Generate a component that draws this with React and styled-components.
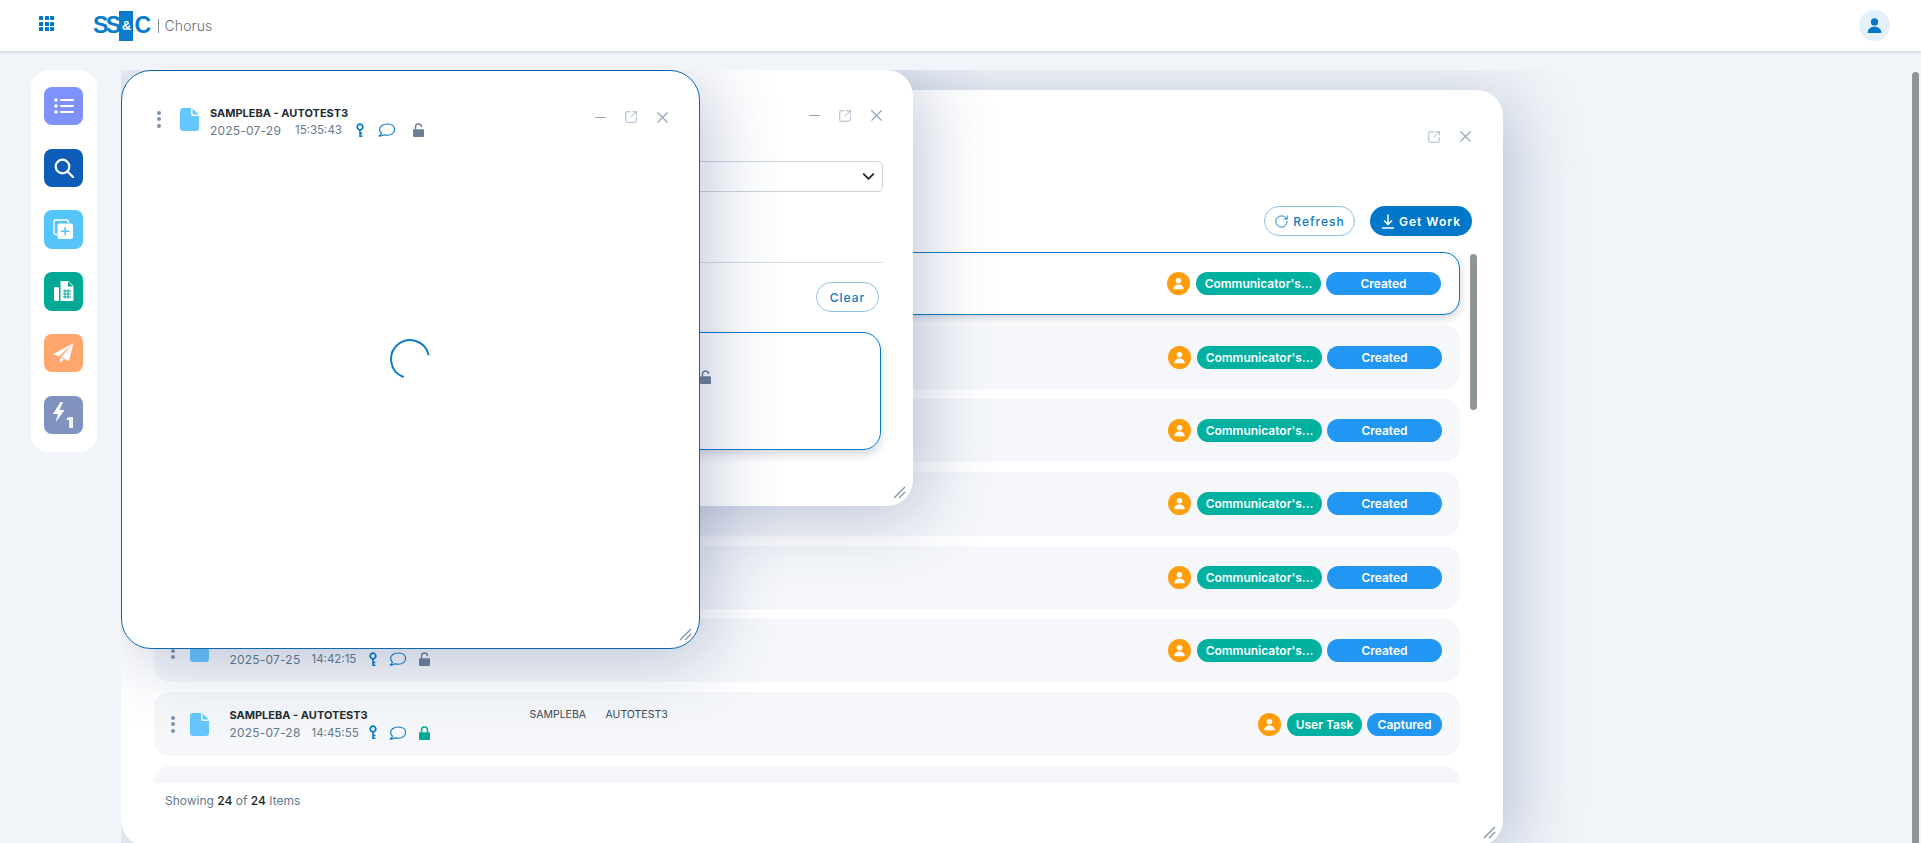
import React from "react";
import styled, { createGlobalStyle } from "styled-components";
import { Minus, X, SquareArrowOutUpRight, RotateCw, ChevronDown } from "lucide-react";

const FONT = `"Inter", "Open Sans", "Liberation Sans", sans-serif`;

const GlobalStyle = createGlobalStyle`
  * { box-sizing: border-box; }
  html, body { margin: 0; height: 100%; overflow: hidden; }
  body { background: #f1f5f9; font-family: ${FONT}; color: #212b36; }
  #root { height: 100%; }
`;

const Page = styled.div`
  height: 100vh;
  display: flex;
  flex-direction: column;
  position: relative;
`;

const TopBar = styled.header`
  height: 51px;
  flex: none;
  display: flex;
  align-items: center;
  padding: 0 31px 0 39px;
  background: #fff;
  box-shadow: 0 1px 3px rgba(60, 70, 90, 0.22);
  position: relative;
  z-index: 5;
`;

const AppGrid = styled.div`
  display: grid;
  grid-template-columns: repeat(3, 4px);
  grid-auto-rows: 4px;
  gap: 1.5px;
  margin-bottom: 4px;

  i { background: #0077c8; border-radius: 0.5px; }
`;

const Logo = styled.div`
  display: flex;
  align-items: center;
  margin-left: 39px;
  height: 30px;
  font-size: 23px;
  font-weight: 800;
  letter-spacing: -2.6px;
  color: #0a7ccb;
  font-family: "Liberation Sans", sans-serif;
`;

const LogoBlock = styled.span`
  width: 14px;
  height: 30px;
  background: #0a7ccb;
  color: #fff;
  font-size: 13px;
  letter-spacing: 0;
  display: flex;
  align-items: center;
  justify-content: center;
  margin: 0 1px 0 1px;
`;

const LogoProduct = styled.span`
  margin-left: 9px;
  padding-left: 6px;
  border-left: 1px solid #8a8f98;
  font-family: ${FONT};
  font-size: 14px;
  line-height: 14px;
  font-weight: 300;
  letter-spacing: 0.1px;
  color: #6c7078;
`;

const Avatar = styled.div`
  width: 31px;
  height: 31px;
  margin-left: auto;
  border-radius: 50%;
  background: #e5f1fa;
  display: flex;
  align-items: center;
  justify-content: center;
`;

const Desktop = styled.main`
  flex: 1;
  min-height: 0;
  display: flex;
  align-items: stretch;
  padding: 19px 0 0 31px;
`;

const Sidebar = styled.nav`
  width: 66px;
  height: 382px;
  flex: none;
  padding: 17px 13px 18px;
  display: flex;
  flex-direction: column;
  gap: 23.4px;
  background: #fff;
  border-radius: 18px;
`;

const SideButton = styled.button`
  all: unset;
  box-sizing: border-box;
  width: 39px;
  height: 38.5px;
  border-radius: 8px;
  background: ${(p) => p.$bg};
  display: flex;
  align-items: center;
  justify-content: center;
  color: #fff;
`;

/* free canvas the windows float on, it clips their shadows */
const WindowCanvas = styled.div`
  flex: 1;
  margin-left: 24px;
  position: relative;
  overflow: hidden;
`;

const Win = styled.section`
  position: absolute;
  left: ${(p) => p.$left}px;
  top: ${(p) => p.$top}px;
  width: ${(p) => p.$width}px;
  height: ${(p) => p.$height}px;
  z-index: ${(p) => p.$z};
  background: #fff;
  border-radius: ${(p) => (p.$active ? 30 : 26)}px;
  border: ${(p) => (p.$active ? "1px solid #0a69ad" : "none")};
  box-shadow: 10px 10px 70px rgba(45, 70, 130, 0.3);
  display: flex;
  flex-direction: column;
`;

const WinControls = styled.div`
  display: flex;
  align-items: center;
  justify-content: flex-end;
  gap: 15px;
  margin-left: auto;
  margin-bottom: ${(p) => p.$lift || 0}px;
  color: #8fa3ba;
`;

const Grip = styled.svg`
  position: absolute;
  right: 7px;
  bottom: 7px;
  width: 13px;
  height: 13px;
`;

/* work list window */
const ListHead = styled.div`
  padding: 37px 28px 0 0;
  height: 116px;
`;

const Toolbar = styled.div`
  display: flex;
  justify-content: flex-end;
  gap: 15px;
  padding-right: 31px;
`;

const PillButton = styled.button`
  all: unset;
  box-sizing: border-box;
  height: 30px;
  width: ${(p) => p.$w}px;
  border-radius: 15px;
  display: flex;
  align-items: center;
  justify-content: center;
  gap: 4px;
  font-size: 12px;
  font-weight: ${(p) => (p.$primary ? 600 : 500)};
  letter-spacing: 1px;
  color: ${(p) => (p.$primary ? "#fff" : "#0c78c4")};
  background: ${(p) => (p.$primary ? "#0077c8" : "#fff")};
  border: ${(p) => (p.$primary ? "none" : "1px solid #8cc2e8")};
`;

const ListArea = styled.div`
  position: relative;
  margin: 16px 23px 0 33px;
  height: 531px;
  padding-right: 20px;
  overflow: hidden;
  display: flex;
  flex-direction: column;
  gap: 10px;
`;

const ScrollThumb = styled.div`
  position: absolute;
  right: 3px;
  top: 2px;
  width: 7px;
  height: 156px;
  border-radius: 4px;
  background: #8f9496;
`;

const PageThumb = styled(ScrollThumb)`
  right: 2px;
  top: 72px;
  height: 790px;
  z-index: 6;
`;

const Row = styled.div`
  flex: none;
  height: 63.4px;
  display: flex;
  align-items: center;
  padding: 0 18px 0 16.5px;
  border-radius: 16px;
  background: ${(p) => (p.$selected ? "#fff" : "#f5f7fa")};
  border: ${(p) => (p.$selected ? "1px solid #0c78c4" : "none")};
  box-shadow: ${(p) => (p.$selected ? "0 3px 8px rgba(60, 70, 110, 0.25)" : "none")};
`;

const Kebab = styled.div`
  width: 5px;
  display: flex;
  flex-direction: column;
  gap: 2.5px;
  flex: none;

  i { width: 4px; height: 4px; border-radius: 50%; background: #7f93ab; }
`;

const Info = styled.div`
  margin-left: ${(p) => p.$gap}px;
  width: ${(p) => p.$width}px;
  flex: none;
`;

const Title = styled.div`
  font-size: 11px;
  line-height: 16px;
  font-weight: 700;
  color: #232b33;
  white-space: nowrap;
`;

const Meta = styled.div`
  display: flex;
  align-items: center;
  margin-top: 1px;
  height: 17px;
  font-size: 11.5px;
  color: #64788f;
  white-space: nowrap;
`;

const MetaDate = styled.span`
  width: 70px;
  font-size: 12px;
  letter-spacing: 0.2px;
`;

const MetaTime = styled.span`
  margin-left: ${(p) => p.$gap}px;
  width: ${(p) => p.$width}px;
`;

const FileShape = styled.svg`
  flex: none;
  margin-left: ${(p) => p.$gap}px;
`;

const MetaIcon = styled.svg`
  flex: none;
  margin-left: ${(p) => p.$gap}px;
`;

const Field = styled.span`
  font-size: 10.5px;
  color: #3d4650;
  margin-right: ${(p) => p.$gap}px;
  align-self: flex-start;
  margin-top: 16px;
`;

const Badges = styled.div`
  margin-left: auto;
  display: flex;
  align-items: center;
  gap: 5px;
`;

const Person = styled.div`
  width: 23px;
  height: 23px;
  margin-right: 1px;
  border-radius: 50%;
  background: #ff9d0a;
  display: flex;
  align-items: center;
  justify-content: center;
`;

const Badge = styled.span`
  height: 23px;
  width: ${(p) => p.$w}px;
  border-radius: 12px;
  background: ${(p) => (p.$kind === "task" ? "#00b0a0" : "#2196f3")};
  color: #fff;
  font-size: 12px;
  font-weight: 600;
  display: flex;
  align-items: center;
  justify-content: center;
  white-space: nowrap;
`;

const Footer = styled.div`
  padding: 10px 0 0 44px;
  font-size: 12px;
  color: #64788f;

  b { font-weight: 500; color: #1c232b; }
`;

/* query window */
const QueryHead = styled.div`
  padding: 36px 27px 0 0;
  height: 91px;
`;

const FakeSelect = styled.div`
  height: 31px;
  margin: 0 30px 0 40px;
  border: 1px solid #c9d4de;
  border-radius: 5px;
  display: flex;
  align-items: center;
  justify-content: flex-end;
  padding-right: 4px;
  color: #222b33;
`;

const Divider = styled.hr`
  margin: 70px 30px 0 40px;
  border: 0;
  border-top: 1px solid #d8dfe6;
`;

const ClearRow = styled.div`
  display: flex;
  justify-content: flex-end;
  padding: 19px 34px 0 0;
`;

const ResultCard = styled.div`
  height: 118px;
  margin: 20px 32px 0 40px;
  padding: 18px 0 0 14px;
  display: flex;
  align-items: flex-start;
  border: 1.5px solid #0077c8;
  border-radius: 18px;
  box-shadow: 0 5px 10px rgba(60, 70, 110, 0.2);
`;

/* viewer window */
const ViewerHead = styled.div`
  display: flex;
  align-items: center;
  padding: 31px 27px 0 35px;
  height: 70px;

  & > ${Kebab}, & > ${FileShape} {
    margin-bottom: 5px;
  }
`;

const ViewerBody = styled.div`
  flex: 1;
  display: flex;
  align-items: center;
  justify-content: center;
  padding: 0 2px 70px 0;
`;

const FileIcon = ({ gap = 0 }) => (
  <FileShape $gap={gap} width="19" height="23" viewBox="0 0 19 23">
    <path d="M3 0h8v6a2 2 0 0 0 2 2h6v12a3 3 0 0 1-3 3H3a3 3 0 0 1-3-3V3a3 3 0 0 1 3-3z" fill="#66c7ff" />
    <path d="M12.5 0.4 18.6 6.6H13.5a1 1 0 0 1-1-1z" fill="#66c7ff" />
  </FileShape>
);

const KeyIcon = ({ gap }) => (
  <MetaIcon $gap={gap} width="8" height="15" viewBox="0 0 8 15" fill="none" stroke="#0077c8">
    <circle cx="4" cy="4" r="2.8" strokeWidth="1.7" />
    <path d="M4 7v7M4 10.5h2.4M4 13.2h2.4" strokeWidth="1.6" />
  </MetaIcon>
);

const ChatIcon = ({ gap }) => (
  <MetaIcon $gap={gap} width="18" height="14" viewBox="0 0 18 14" fill="none" stroke="#0077c8" strokeWidth="1.1">
    <path d="M9.5 1C5 1 1.6 3.3 1.6 6.4c0 1.500.7 2.700 1.900 3.700-.3 1.200-1.200 2.300-2.600 3 2.300 0 4-.5 5.100-1.300 1 .3 2.100.5 3.100.5 4.400 0 7.500-2.500 7.500-5.800S13.900 1 9.500 1z" />
  </MetaIcon>
);

const LockIcon = ({ gap, closed }) => {
  const color = closed ? "#00a896" : "#6c7f96";
  return (
    <MetaIcon $gap={gap} width="11" height="14" viewBox="0 0 11 14" fill="none">
      <path
        d={closed ? "M2.500 6.500V4a3 3 0 0 1 6 0v2.500" : "M2.500 6.500V4a3 3 0 0 1 6 0"}
        stroke={color}
        strokeWidth="1.4"
      />
      <rect x="0" y="6.300" width="11" height="7.700" rx="1" fill={color} />
    </MetaIcon>
  );
};

const PersonGlyph = ({ size = 15, color = "#fff" }) => (
  <svg width={size} height={size} viewBox="0 0 16 16" fill={color}>
    <circle cx="8" cy="4.600" r="3.400" />
    <path d="M1.500 15c0-3.600 2.900-5.800 6.500-5.800s6.500 2.200 6.500 5.800z" />
  </svg>
);

const Controls = ({ minimize, lift }) => (
  <WinControls $lift={lift}>
    {minimize && <Minus size={17} strokeWidth={1.4} />}
    <SquareArrowOutUpRight size={14} strokeWidth={1.3} />
    <X size={19} strokeWidth={1.4} />
  </WinControls>
);

const ResizeGrip = () => (
  <Grip viewBox="0 0 13 13" fill="none" stroke="#8090a6" strokeWidth="1.300">
    <path d="M1 12 12 1M6 12l6-6" />
  </Grip>
);

const Dots = () => (
  <Kebab>
    <i />
    <i />
    <i />
  </Kebab>
);

const ItemInfo = ({ date, time, closed, timeGap, timeWidth, infoGap, infoWidth, keyGap, chatGap, lockGap }) => (
  <Info $gap={infoGap} $width={infoWidth}>
    <Title>SAMPLEBA - AUTOTEST3</Title>
    <Meta>
      <MetaDate>{date}</MetaDate>
      <MetaTime $gap={timeGap} $width={timeWidth}>{time}</MetaTime>
      <KeyIcon gap={keyGap} />
      <ChatIcon gap={chatGap} />
      <LockIcon gap={lockGap} closed={closed} />
    </Meta>
  </Info>
);

const WORK_ITEMS = [
  { date: "2025-07-25", time: "14:35:02", task: "Communicator's...", status: "Created" },
  { date: "2025-07-25", time: "14:36:10", task: "Communicator's...", status: "Created" },
  { date: "2025-07-25", time: "14:37:21", task: "Communicator's...", status: "Created" },
  { date: "2025-07-25", time: "14:38:44", task: "Communicator's...", status: "Created" },
  { date: "2025-07-25", time: "14:40:03", task: "Communicator's...", status: "Created" },
  { date: "2025-07-25", time: "14:42:15", task: "Communicator's...", status: "Created" },
  { date: "2025-07-28", time: "14:45:55", task: "User Task", status: "Captured", closed: true, compact: true },
  { date: "2025-07-28", time: "14:47:30", task: "User Task", status: "Captured", closed: true, compact: true },
];

const rowInfo = {
  infoGap: 21,
  infoWidth: 300,
  timeGap: 12,
  timeWidth: 47,
  keyGap: 10,
  chatGap: 12,
  lockGap: 12.5,
};

export default function App() {
  return (
    <Page>
      <GlobalStyle />
      <TopBar>
        <AppGrid>
          {Array.from({ length: 9 }, (_, i) => (
            <i key={i} />
          ))}
        </AppGrid>
        <Logo>
          SS
          <LogoBlock>&amp;</LogoBlock>
          C<LogoProduct>Chorus</LogoProduct>
        </Logo>
        <Avatar>
          <PersonGlyph size={17} color="#0077c8" />
        </Avatar>
      </TopBar>

      <Desktop>
        <Sidebar>
          <SideButton $bg="#7f92fb">
            <svg width="20" height="16" viewBox="0 0 20 16" fill="#fff">
              <circle cx="2" cy="2" r="1.800" />
              <circle cx="2" cy="8" r="1.800" />
              <circle cx="2" cy="14" r="1.800" />
              <rect x="6" y="0.900" width="14" height="2.200" rx="1" />
              <rect x="6" y="6.900" width="14" height="2.200" rx="1" />
              <rect x="6" y="12.900" width="14" height="2.200" rx="1" />
            </svg>
          </SideButton>
          <SideButton $bg="#0c5cb8">
            <svg width="20" height="20" viewBox="0 0 20 20" fill="none" stroke="#fff" strokeWidth="2.200">
              <circle cx="8.500" cy="8.500" r="6.800" />
              <path d="M13.500 13.500 19 19" strokeLinecap="round" />
            </svg>
          </SideButton>
          <SideButton $bg="#55c4fb">
            <svg width="21" height="21" viewBox="0 0 21 21" fill="none" stroke="#fff" strokeWidth="1.300">
              <path d="M4 15.500H3a2 2 0 0 1-2-2V3a2 2 0 0 1 2-2h10.500a2 2 0 0 1 2 2v1" />
              <rect x="4.500" y="4.500" width="15.500" height="15.500" rx="2" fill="#fff" stroke="none" />
              <path d="M12.200 8v8.500M8 12.200h8.500" stroke="#55c4fb" strokeWidth="1.500" />
            </svg>
          </SideButton>
          <SideButton $bg="#00a896">
            <svg width="20" height="20" viewBox="0 0 20 20" fill="#fff">
              <rect x="0" y="6" width="5" height="14" rx="1.500" />
              <path d="M6.500 0h8l5 5v15h-13z" />
              <path d="M14 0.500V5.500h5" fill="#00a896" />
              <path d="M9 10h8M9 13h8M9 16h8M11 8.500v9M14 8.500v9" stroke="#00a896" strokeWidth="1" />
            </svg>
          </SideButton>
          <SideButton $bg="#ffa56e">
            <svg width="21" height="20" viewBox="0 0 21 20" fill="#fff">
              <path d="M20.500 0 0 11.200l6 2.300L20.500 0zM20.500 0 8 14.300l8 3.700L20.500 0zM7 15v4.500l4-3z" />
            </svg>
          </SideButton>
          <SideButton $bg="#7f92c0">
            <svg width="22" height="26" viewBox="0 0 22 26" fill="#fff">
              <path d="M7.500 0 0 12h5l-2.500 8.500L11.500 8H6.500L10 0z" />
              <rect x="16" y="15" width="4" height="11" opacity="0.9" />
              <path d="M13.500 16.500 16 15v3h-2.500z" opacity="0.9" />
            </svg>
          </SideButton>
        </Sidebar>

        <WindowCanvas>
          <Win $left={0} $top={20} $width={1382} $height={756} $z={1}>
            <ListHead>
              <Controls />
            </ListHead>
            <Toolbar>
              <PillButton $w={91}>
                <RotateCw size={15} strokeWidth={1.5} />
                Refresh
              </PillButton>
              <PillButton $primary $w={102}>
                <svg width="14" height="15" viewBox="0 0 14 15" fill="none" stroke="#fff" strokeWidth="1.500">
                  <path d="M7 0.500v9.500M3 6.500 7 10.500l4-4M1 14h12" />
                </svg>
                Get Work
              </PillButton>
            </Toolbar>
            <ListArea>
              {WORK_ITEMS.map((item, i) => (
                <Row key={i} $selected={i === 0}>
                  <Dots />
                  <FileIcon gap={14} />
                  <ItemInfo {...rowInfo} date={item.date} time={item.time} closed={item.closed} />
                  <Field $gap={19.5}>SAMPLEBA</Field>
                  <Field $gap={0}>AUTOTEST3</Field>
                  <Badges>
                    <Person>
                      <PersonGlyph size={13} />
                    </Person>
                    <Badge $kind="task" $w={item.compact ? 75 : 125}>{item.task}</Badge>
                    <Badge $kind="status" $w={item.compact ? 75 : 115}>{item.status}</Badge>
                  </Badges>
                </Row>
              ))}
              <ScrollThumb />
            </ListArea>
            <Footer>
              Showing <b>24</b> of <b>24</b> Items
            </Footer>
            <ResizeGrip />
          </Win>

          <Win $left={299} $top={0} $width={493} $height={436} $z={2}>
            <QueryHead>
              <Controls minimize />
            </QueryHead>
            <FakeSelect>
              <ChevronDown size={19} strokeWidth={2.4} />
            </FakeSelect>
            <Divider />
            <ClearRow>
              <PillButton $w={63}>Clear</PillButton>
            </ClearRow>
            <ResultCard>
              <Dots />
              <FileIcon gap={14} />
              <ItemInfo
                infoGap={14}
                infoWidth={300}
                date="2025-07-29"
                time="15:35:43"
                timeGap={8}
                timeWidth={45}
                keyGap={10}
                chatGap={8}
                lockGap={6}
              />
            </ResultCard>
            <ResizeGrip />
          </Win>

          <Win $left={0} $top={0} $width={579} $height={578.5} $z={3} $active>
            <ViewerHead>
              <Dots />
              <FileIcon gap={18} />
              <ItemInfo
                infoGap={11}
                infoWidth={300}
                date="2025-07-29"
                time="15:35:43"
                timeGap={15}
                timeWidth={47}
                keyGap={14}
                chatGap={14}
                lockGap={16.5}
              />
              <Controls minimize lift={9} />
            </ViewerHead>
            <ViewerBody>
              <svg width="44" height="44" viewBox="0 0 44 44" fill="none" stroke="#0f7cc9" strokeWidth="2" strokeLinecap="round">
                <path d="M40.500 17.500A19 19 0 1 0 15 39.800" />
              </svg>
            </ViewerBody>
            <ResizeGrip />
          </Win>
        </WindowCanvas>
      </Desktop>
      <PageThumb />
    </Page>
  );
}
